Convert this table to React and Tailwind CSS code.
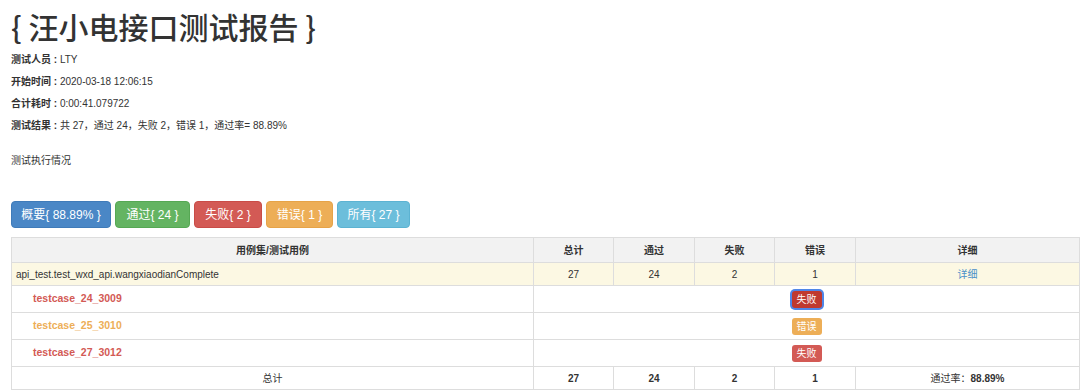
import React from 'react';

const FONT = { fontFamily: '"Liberation Sans", Arial, "Noto Sans CJK SC", sans-serif' };

const summary = [
  { label: '测试人员', value: 'LTY' },
  { label: '开始时间', value: '2020-03-18 12:06:15' },
  { label: '合计耗时', value: '0:00:41.079722' },
  { label: '测试结果', value: '共 27，通过 24，失败 2，错误 1，通过率= 88.89%' },
];

const tabs = [
  { text: '概要{ 88.89% }', cls: 'bg-[#4a87c6] border-[#3f7bb9] w-[100px]' },
  { text: '通过{ 24 }', cls: 'bg-[#64b462] border-[#56a854] w-[75px]' },
  { text: '失败{ 2 }', cls: 'bg-[#d35a55] border-[#c94c47] w-[68px]' },
  { text: '错误{ 1 }', cls: 'bg-[#edae57] border-[#e6a348] w-[67px]' },
  { text: '所有{ 27 }', cls: 'bg-[#6cbedb] border-[#5cb3d2] w-[73px]' },
];

const cases = [
  { name: 'testcase_24_3009', color: 'text-[#d35a55]', badge: '失败', badgeCls: 'bg-[#c0392f] ring-2 ring-[#4f86e8]' },
  { name: 'testcase_25_3010', color: 'text-[#edae57]', badge: '错误', badgeCls: 'bg-[#edae57]' },
  { name: 'testcase_27_3012', color: 'text-[#d35a55]', badge: '失败', badgeCls: 'bg-[#d35a55]' },
];

const cell = 'border border-[#dddddd] text-center';

export default function App() {
  return (
    <div className="min-h-screen bg-white text-[#333333] pl-[11px] pr-px" style={FONT}>
      <h1
        className="h-[49px] pt-[8px] text-[30px] leading-[36px] font-medium"
        style={{ fontFamily: '"Noto Sans CJK SC", "Liberation Sans", sans-serif' }}
      >
        {'{ 汪小电接口测试报告 }'}
      </h1>
      {summary.map((row) => (
        <p key={row.label} className="h-[22px] text-[10px] leading-[22px]">
          <strong className="font-bold">{row.label} : </strong>
          {row.value}
        </p>
      ))}
      <p className="mt-[13px] h-[22px] text-[10px] leading-[22px]">测试执行情况</p>

      <div className="mt-[29px] flex gap-[4px]">
        {tabs.map((t) => (
          <button
            key={t.text}
            className={`h-[27px] rounded-[4px] border text-[12px] text-white ${t.cls}`}
          >
            {t.text}
          </button>
        ))}
      </div>

      <table className="mt-[9px] w-[1068px] table-fixed border-collapse text-[10px]">
        <colgroup>
          <col className="w-[522px]" />
          <col className="w-[80px]" />
          <col className="w-[81px]" />
          <col className="w-[80px]" />
          <col className="w-[81px]" />
          <col className="w-[224px]" />
        </colgroup>
        <thead>
          <tr className="h-[25px] bg-[#f2f2f2] font-bold">
            <th className={cell}>用例集/测试用例</th>
            <th className={cell}>总计</th>
            <th className={cell}>通过</th>
            <th className={cell}>失败</th>
            <th className={cell}>错误</th>
            <th className={cell}>详细</th>
          </tr>
        </thead>
        <tbody>
          <tr className="h-[23px] bg-[#fcf8e3]">
            <td className="border border-[#dddddd] pl-[4px] text-left">api_test.test_wxd_api.wangxiaodianComplete</td>
            <td className={cell}>27</td>
            <td className={cell}>24</td>
            <td className={cell}>2</td>
            <td className={cell}>1</td>
            <td className={`${cell} text-[#4a90c9]`}>详细</td>
          </tr>
          {cases.map((c) => (
            <tr key={c.name} className="h-[27px]">
              <td className={`border border-[#dddddd] pl-[21px] text-[10.5px] font-bold ${c.color}`}>{c.name}</td>
              <td colSpan={5} className={cell}>
                <span className={`inline-flex h-[17px] w-[30px] items-center justify-center rounded-[3px] text-[10px] text-white ${c.badgeCls}`}>
                  {c.badge}
                </span>
              </td>
            </tr>
          ))}
          <tr className="h-[23px]">
            <td className={cell}>总计</td>
            <td className={`${cell} font-bold`}>27</td>
            <td className={`${cell} font-bold`}>24</td>
            <td className={`${cell} font-bold`}>2</td>
            <td className={`${cell} font-bold`}>1</td>
            <td className={cell}>
              通过率：<strong className="font-bold">88.89%</strong>
            </td>
          </tr>
        </tbody>
      </table>
    </div>
  );
}
